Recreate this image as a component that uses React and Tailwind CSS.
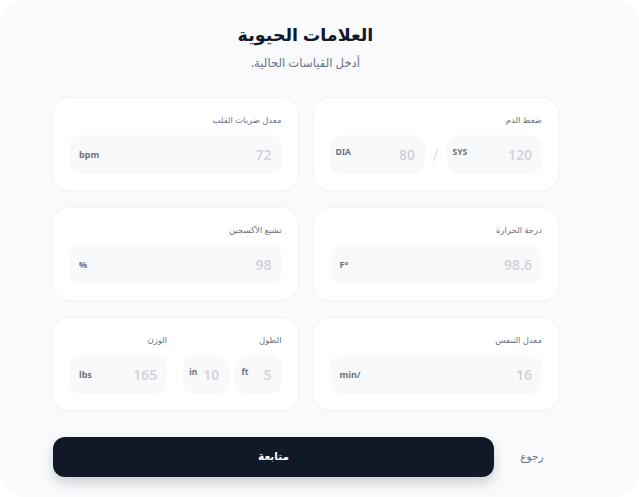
import React from "react";

function Box({ value, unit, small = false, className = "" }) {
  return (
    <div
      className={
        "flex h-[39px] items-center justify-between gap-1 rounded-xl bg-[#f8f9fb] " +
        (small ? "pl-[6px] pr-[10px] " : "px-[10px] ") +
        className
      }
    >
      <span className="text-[14px] font-semibold leading-none text-[#d1d5db]">{value}</span>
      <span
        className={
          "font-bold leading-none text-[#6b7280] " +
          (small ? "-mt-[5px] text-[8.5px]" : "text-[9px]")
        }
      >
        {unit}
      </span>
    </div>
  );
}

function Label({ children }) {
  return <div className="text-[8.5px] leading-3 text-[#6b7280]">{children}</div>;
}

function Card({ label, children }) {
  return (
    <div className="rounded-2xl bg-white p-4 shadow-[0_0_0_1px_#f1f3f6,0_1px_2px_rgba(0,0,0,0.03)]">
      <Label>{label}</Label>
      <div className="mt-[9px]">{children}</div>
    </div>
  );
}

export default function App() {
  return (
    <div className="bg-white" style={{ fontFamily: '"Noto Sans", "DejaVu Sans", sans-serif' }}>
      <div dir="rtl" className="h-[497px] w-[639px] rounded-[24px] bg-[#f8fafc] pl-[53px] pr-[81px] pt-5">
        <h1 className="text-center text-[17.5px] font-bold leading-7 text-[#111827]">العلامات الحيوية</h1>
        <p className="mt-1 text-center text-[11.7px] leading-5 text-[#6b7280]">أدخل القياسات الحالية.</p>

        <div className="mt-[26px] grid grid-cols-2 gap-x-4 gap-y-[18px]">
          <Card label="ضغط الدم">
            <div className="flex items-center gap-[8px]">
              <Box value="120" unit="SYS" small className="flex-1" />
              <span className="text-[16px] font-light leading-none text-[#d1d5db]">/</span>
              <Box value="80" unit="DIA" small className="flex-1" />
            </div>
          </Card>
          <Card label="معدل ضربات القلب">
            <Box value="72" unit="bpm" />
          </Card>

          <Card label="درجة الحرارة">
            <Box value="98.6" unit="°F" />
          </Card>
          <Card label="تشبع الأكسجين">
            <Box value="98" unit="%" />
          </Card>

          <Card label="معدل التنفس">
            <Box value="16" unit="/min" />
          </Card>
          <div className="rounded-2xl bg-white p-4 shadow-[0_0_0_1px_#f1f3f6,0_1px_2px_rgba(0,0,0,0.03)]">
            <div className="grid grid-cols-2 gap-4">
              <div>
                <Label>الطول</Label>
                <div className="mt-[9px] flex gap-[6px]">
                  <Box value="5" unit="ft" small className="flex-1" />
                  <Box value="10" unit="in" small className="flex-1" />
                </div>
              </div>
              <div>
                <Label>الوزن</Label>
                <div className="mt-[9px]">
                  <Box value="165" unit="lbs" />
                </div>
              </div>
            </div>
          </div>
        </div>

        <div className="mt-[27px] flex items-center gap-3">
          <button className="w-[52px] py-2 text-[10.5px] font-medium text-[#6b7280]">رجوع</button>
          <button className="h-10 flex-1 rounded-xl bg-[#111827] text-[10.5px] font-bold text-white shadow-[0_6px_12px_rgba(17,24,39,0.18)]">
            متابعة
          </button>
        </div>
      </div>
    </div>
  );
}
